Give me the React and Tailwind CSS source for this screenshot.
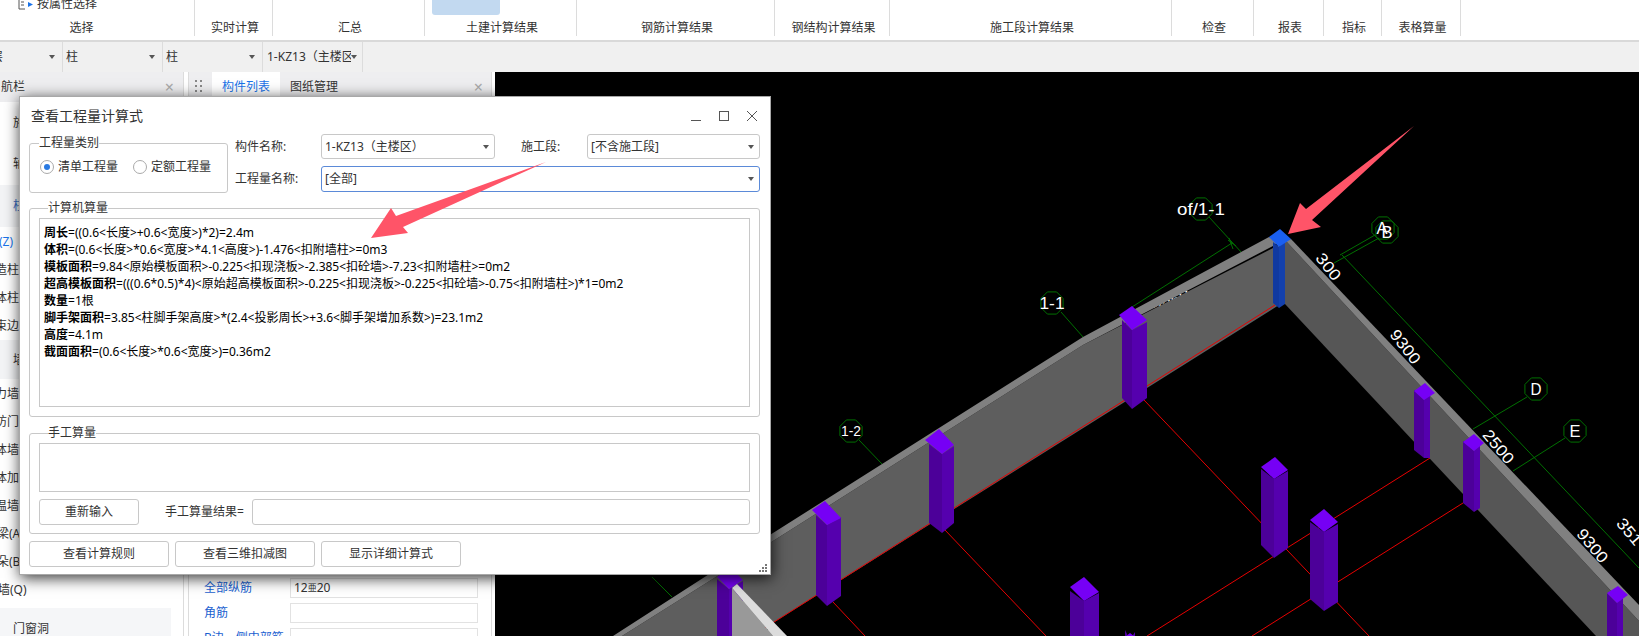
import React from "react";

const ribbon = [
  { w: "w-[195px]", label: "选择", pad: "pr-[31px]" },
  { w: "w-[78px]", label: "实时计算" },
  { w: "w-[152px]", label: "汇总" },
  { w: "w-[152px]", label: "土建计算结果", blue: true },
  { w: "w-[198px]", label: "钢筋计算结果" },
  { w: "w-[115px]", label: "钢结构计算结果" },
  { w: "w-[282px]", label: "施工段计算结果" },
  { w: "w-[82px]", label: "检查" },
  { w: "w-[70px]", label: "报表" },
  { w: "w-[58px]", label: "指标" },
  { w: "w-[79px]", label: "表格算量" },
];

const sideRows = [
  { h: "h-[41px]", text: "施工段", x: "ml-[13px]" },
  { h: "h-[42px]", text: "轴线", x: "ml-[13px]" },
  { h: "h-[42px]", text: "柱", x: "ml-[13px]", bg: "bg-[#f3f4f6]", color: "text-[#3a6fc4]" },
  { h: "h-[29px]", text: "(Z)", x: "-ml-[1px]", color: "text-[#1a73e8]" },
  { h: "h-[28px]", text: "造柱", x: "-ml-[5px]" },
  { h: "h-[28px]", text: "体柱", x: "-ml-[5px]" },
  { h: "h-[28px]", text: "束边", x: "-ml-[5px]" },
  { h: "h-[39px]", text: "墙", x: "ml-[13px]", bg: "bg-[#f3f4f6]" },
  { h: "h-[29px]", text: "力墙", x: "-ml-[5px]" },
  { h: "h-[28px]", text: "防门", x: "-ml-[5px]" },
  { h: "h-[28px]", text: "体墙", x: "-ml-[5px]" },
  { h: "h-[28px]", text: "体加", x: "-ml-[5px]" },
  { h: "h-[28px]", text: "温墙", x: "-ml-[5px]" },
  { h: "h-[28px]", text: "梁(A", x: "-ml-[3px]" },
  { h: "h-[28px]", text: "朵(B", x: "-ml-[3px]" },
  { h: "h-[28px]", text: "墙(Q)", x: "-ml-[2px]" },
];

const calcLines = [
  ["周长", "=((0.6<长度>+0.6<宽度>)*2)=2.4m"],
  ["体积", "=(0.6<长度>*0.6<宽度>*4.1<高度>)-1.476<扣附墙柱>=0m3"],
  ["模板面积", "=9.84<原始模板面积>-0.225<扣现浇板>-2.385<扣砼墙>-7.23<扣附墙柱>=0m2"],
  ["超高模板面积", "=(((0.6*0.5)*4)<原始超高模板面积>-0.225<扣现浇板>-0.225<扣砼墙>-0.75<扣附墙柱>)*1=0m2"],
  ["数量", "=1根"],
  ["脚手架面积", "=3.85<柱脚手架高度>*(2.4<投影周长>+3.6<脚手架增加系数>)=23.1m2"],
  ["高度", "=4.1m"],
  ["截面面积", "=(0.6<长度>*0.6<宽度>)=0.36m2"],
];

const Caret = () => (
  <span className="shrink-0 w-0 h-0 border-x-[3px] border-x-transparent border-t-[4px] border-t-[#555]" />
);

const Select = ({ value, active, className }) => (
  <div
    className={`flex items-center justify-between pl-[3px] pr-[5px] bg-white border rounded-[3px] ${
      active ? "border-[#5b8ad8]" : "border-[#c8c8c8]"
    } ${className}`}
  >
    <span>{value}</span>
    <Caret />
  </div>
);

const Btn = ({ children, className }) => (
  <button className={`h-[26px] flex items-center justify-center bg-white border border-[#c8c8c8] rounded-[3px] text-[#333] ${className}`}>
    {children}
  </button>
);

const octagon = (cx, cy, r) =>
  Array.from({ length: 8 }, (_, i) => {
    const a = ((i + 0.5) * Math.PI) / 4;
    return `${cx + r * Math.cos(a)},${cy + r * Math.sin(a)}`;
  }).join(" ");

const greens = [
  [1209, 217, 1242, 253],
  [1132, 307, 1232, 243],
  [1228, 240, 1236, 246],
  [1229, 238, 1233, 249],
  [1061, 312, 1083, 337],
  [859, 440, 882, 464],
  [652, 577, 672, 597],
  [1375, 235, 1340, 255],
  [1379, 238, 1334, 263],
  [1342, 255, 1639, 568],
  [1527, 397, 1473, 429],
  [1565, 438, 1513, 471],
];

const reds = [
  [1275, 305, 752, 636],
  [1144, 400, 1369, 636],
  [945, 530, 1046, 636],
  [833, 602, 865, 636],
  [1430, 458, 1147, 636],
  [1463, 503, 1252, 636],
];

const circles = [
  [1201, 209],
  [1052, 303],
  [851, 431],
  [1383, 228],
  [1387, 232],
  [1536, 389],
  [1575, 431],
];

const labels = [
  { t: "of/1-1", x: 1201, y: 215, len: 48, size: 17 },
  { t: "1-1", x: 1052, y: 309, len: 25, size: 17 },
  { t: "1-2", x: 851, y: 436, len: 20, size: 15 },
  { t: "A", x: 1382, y: 234, len: 11, size: 16 },
  { t: "B", x: 1387, y: 238, len: 11, size: 16 },
  { t: "D", x: 1536, y: 395, len: 11, size: 16 },
  { t: "E", x: 1575, y: 437, len: 11, size: 16 },
  { t: "7250", x: 1172, y: 307, len: 38, size: 16, rot: -33 },
  { t: "300", x: 1328, y: 272, len: 30, size: 16, rot: 52 },
  { t: "9300", x: 1405, y: 352, len: 39, size: 16, rot: 52 },
  { t: "2500", x: 1498, y: 452, len: 39, size: 16, rot: 50 },
  { t: "9300", x: 1592, y: 551, len: 39, size: 16, rot: 50 },
  { t: "351", x: 1629, y: 537, len: 30, size: 16, rot: 50 },
];

// top: l, t, r, b points of the diamond; l/c/r and botL/botR/tip of the shaft
const columns = [
  { top: "1119,315 1132,306 1147,320 1132,330", l: 1122, c: 1132, r: 1147, by: 330, botL: 398, botR: 398, tip: 409 },
  { top: "925,440 939,429 954,445 942,454", l: 929, c: 942, r: 954, by: 454, botL: 523, botR: 523, tip: 533 },
  { top: "812,510 825,501 841,518 827,525", l: 816, c: 827, r: 841, by: 525, botL: 595, botR: 596, tip: 606 },
  { top: "1414,391 1425,383 1435,393 1424,400", l: 1414, c: 1424, r: 1430, by: 400, botL: 450, botR: 458, tip: 458 },
  { top: "1463,442 1474,434 1484,443 1474,451", l: 1463, c: 1474, r: 1480, by: 451, botL: 503, botR: 508, tip: 512 },
  { top: "1607,593 1618,586 1628,595 1617,603", l: 1607, c: 1617, r: 1623, by: 603, botL: 640, botR: 640, tip: 640 },
  { top: "1261,467 1275,457 1288,470 1274,479", l: 1261, c: 1274, r: 1288, by: 479, botL: 545, botR: 548, tip: 558 },
  { top: "1310,520 1324,509 1338,522 1324,532", l: 1310, c: 1324, r: 1338, by: 532, botL: 599, botR: 602, tip: 611 },
  { top: "1070,587 1084,577 1099,592 1084,601", l: 1070, c: 1084, r: 1099, by: 601, botL: 640, botR: 640, tip: 640 },
  { top: "1125,637 1130,633 1135,637 1130,640", l: 1125, c: 1130, r: 1135, by: 640, botL: 640, botR: 640, tip: 640 },
  { top: "717,577 730,567 743,580 729,589", l: 717, c: 729, r: 743, by: 589, botL: 640, botR: 640, tip: 640 },
];

const Model = () => (
  <svg className="block w-full h-full" viewBox="495 72 1144 564">
    <g stroke="#007000" strokeWidth="1" fill="none">
      {greens.map(([x1, y1, x2, y2], i) => (
        <line key={i} x1={x1} y1={y1} x2={x2} y2={y2} />
      ))}
      {circles.map(([x, y], i) => (
        <polygon key={i} points={octagon(x, y, 12)} />
      ))}
    </g>
    {labels.map((l, i) => (
      <text
        key={i}
        x={l.x}
        y={l.y}
        textAnchor="middle"
        fill="#fff"
        fontSize={l.size}
        fontFamily="'Liberation Sans', sans-serif"
        textLength={l.len}
        lengthAdjust="spacingAndGlyphs"
        transform={l.rot ? `rotate(${l.rot} ${l.x} ${l.y - 5})` : undefined}
      >
        {l.t}
      </text>
    ))}
    {/* walls */}
    <polygon points="1279,245 1279,305 752,636 622,636 773,541 1083,345" fill="#5e5e5e" />
    <polygon points="1269,237 1083,337 773,533 613,636 622,636 773,541 1083,345 1273,246 1280,240" fill="#808080" />
    <polygon points="1285,240 1639,621 1639,640 1596,636 1285,304" fill="#565656" />
    <polygon points="1291,239 1639,605 1639,621 1285,240" fill="#808080" />
    {/* front wall, lower left corner */}
    <polygon points="732,588 732,636 777,636" fill="#999999" />
    {reds.map(([x1, y1, x2, y2], i) => (
      <line key={i} x1={x1} y1={y1} x2={x2} y2={y2} stroke="#e60000" strokeWidth="1" />
    ))}
    <line x1="1277" y1="308" x2="752" y2="639" stroke="#000" strokeWidth="1" />
    {/* corner column */}
    <polygon points="1273,242 1279,247 1279,308 1273,303" fill="#1039a0" />
    <polygon points="1279,247 1285,242 1285,304 1279,308" fill="#1340ac" />
    <polygon points="1269,237 1280,229 1291,239 1279,247" fill="#1a5ff0" />
    {columns.map((c, i) => (
      <g key={i}>
        <polygon points={`${c.l},${c.by - 10} ${c.c},${c.by} ${c.c},${c.tip} ${c.l},${c.botL}`} fill="#4c0099" />
        <polygon points={`${c.c},${c.by} ${c.r},${c.by - 8} ${c.r},${c.botR} ${c.c},${c.tip}`} fill="#5500ae" />
        <polygon points={c.top} fill="#7600f5" />
      </g>
    ))}
    <polygon points="737,584 787,636 773,636 732,588" fill="#dcdcdc" />
    <polygon points="732,588 732,636 773,636" fill="#999999" />
  </svg>
);

export default function App() {
  return (
    <div className="relative w-[1639px] h-[636px] overflow-hidden bg-white flex flex-col text-[12px] leading-[16px] text-[#333] font-['Noto_Sans','Noto_Sans_CJK_SC',sans-serif]">
      {/* ribbon */}
      <div className="h-[42px] shrink-0 flex items-start border-b-2 border-[#d9d9d9]">
        {ribbon.map((s, i) => (
          <div key={s.label} className={`${s.w} h-[36px] shrink-0 flex flex-col border-r border-[#dcdcdc]`}>
            {i === 0 && (
              <div className="h-[16px] -mt-[4px] mb-[8px] flex items-center pl-[18px]">
                <svg width="16" height="12" viewBox="0 0 16 12" className="mr-[3px]">
                  <path d="M7 1H1v10h6M3 4h3M3 7h3" fill="none" stroke="#555" strokeWidth="1" />
                  <path d="M10 4l5 2.5L10 9z" fill="#1a73e8" />
                </svg>
                <span>按属性选择</span>
                <span className="ml-[5px]">
                  <Caret />
                </span>
              </div>
            )}
            {s.blue && <div className="h-[15px] w-[68px] ml-[7px] mb-[5px] bg-[#c2d9f0] rounded-b-[3px]" />}
            {i !== 0 && !s.blue && <div className="h-[20px]" />}
            <div className={`text-center ${s.pad || "pl-[3px]"}`}>{s.label}</div>
          </div>
        ))}
      </div>

      {/* combo toolbar */}
      <div className="h-[30px] shrink-0 flex bg-[#f0f0f0]">
        <div className="w-[63px] flex items-center justify-end pr-[7px] border-r border-[#dcdcdc] relative overflow-hidden">
          <span className="mr-auto -ml-[9px]">层</span>
          <Caret />
        </div>
        {["柱", "柱"].map((t, i) => (
          <div key={i} className="w-[100px] flex items-center justify-between pl-[3px] pr-[7px] border-r border-[#dcdcdc]">
            <span>{t}</span>
            <Caret />
          </div>
        ))}
        <div className="w-[100px] flex items-center justify-between pl-[4px] pr-[5px] border-r border-[#dcdcdc]">
          <span className="w-[84px] overflow-hidden whitespace-nowrap">1-KZ13（主楼区）</span>
          <Caret />
        </div>
      </div>

      {/* work area */}
      <div className="flex-1 flex min-h-0">
        <div className="w-[184px] shrink-0 border-r border-[#dcdcdc] overflow-hidden">
          <div className="h-[30px] bg-[#eeeef0] flex items-center justify-between pl-[1px] pr-[9px]">
            <span>航栏</span>
            <span className="text-[#aaa] text-[16px]">×</span>
          </div>
          {sideRows.map((r) => (
            <div key={r.text + r.h} className={`${r.h} ${r.bg || ""} flex items-center whitespace-nowrap`}>
              <span className={`${r.x} ${r.color || ""}`}>{r.text}</span>
            </div>
          ))}
          <div className="h-[4px]" />
          <div className="w-[171px] h-[60px] bg-[#f5f6f8] pl-[13px] pt-[13px]">门窗洞</div>
        </div>
        <div className="w-[4px] shrink-0 bg-white" />
        <div className="w-[304px] shrink-0 border-x border-[#dcdcdc] overflow-hidden">
          <div className="h-[30px] bg-[#eeeef0] flex items-center pr-[8px]">
            <svg width="8" height="14" viewBox="0 0 8 14" className="ml-[6px] mr-[9px]" fill="#888">
              <rect x="0" y="0" width="2" height="2" />
              <rect x="5" y="0" width="2" height="2" />
              <rect x="0" y="5" width="2" height="2" />
              <rect x="5" y="5" width="2" height="2" />
              <rect x="0" y="10" width="2" height="2" />
              <rect x="5" y="10" width="2" height="2" />
            </svg>
            <div className="w-[68px] h-full bg-white flex items-center justify-center text-[#1a73e8]">构件列表</div>
            <div className="ml-[10px]">图纸管理</div>
            <span className="ml-auto text-[#aaa] text-[16px]">×</span>
          </div>
          <div className="pt-[476px] pl-[15px] pr-[13px] flex flex-col gap-[5px]">
            {[
              ["全部纵筋", <>12<span className="text-[9px] align-[3px]">亜</span>20</>],
              ["角筋", ""],
              ["B边一侧中部筋", ""],
            ].map(([name, val]) => (
              <div key={name} className="flex items-center h-[20px] whitespace-nowrap">
                <span className="w-[86px] text-[#1a5fd0]">{name}</span>
                <div className="flex-1 h-full px-[3px] border border-[#e2e2e2] flex items-center">{val}</div>
              </div>
            ))}
          </div>
        </div>
        <div className="w-[3px] shrink-0 bg-white" />
        <div className="flex-1 bg-black min-w-0">
          <Model />
        </div>
      </div>

      {/* floating dialog */}
      <div className="absolute left-[19px] top-[96px] w-[752px] h-[479px] bg-white border border-[#a8a8a8] shadow-[1px_3px_14px_rgba(0,0,0,0.8)] flex flex-col pl-[9px] pr-[10px]">
        <div className="h-[37px] shrink-0 flex items-center">
          <span className="ml-[2px] text-[14px] text-[#333]">查看工程量计算式</span>
          <div className="ml-auto mr-[3px] flex items-center gap-[18px]">
            <svg width="10" height="10" viewBox="0 0 10 10">
              <path d="M0 9.5h10" stroke="#555" />
            </svg>
            <svg width="10" height="10" viewBox="0 0 10 10">
              <rect x="0.5" y="0.5" width="9" height="9" fill="none" stroke="#555" />
            </svg>
            <svg width="10" height="10" viewBox="0 0 10 10">
              <path d="M0 0l10 10M10 0L0 10" stroke="#555" />
            </svg>
          </div>
        </div>

        <div className="flex shrink-0">
          <fieldset className="w-[199px] h-[58px] mt-[1px] border border-[#c8c8c8] rounded-[3px]">
            <legend className="ml-[9px]">工程量类别</legend>
            <div className="flex items-center h-[16px] mt-[8px] pl-[10px]">
              <span className="w-[14px] h-[14px] rounded-full border border-[#aaa] flex items-center justify-center mr-[4px]">
                <span className="w-[6px] h-[6px] rounded-full bg-[#2a7ae2]" />
              </span>
              <span className="w-[60px] mr-[15px]">清单工程量</span>
              <span className="w-[14px] h-[14px] rounded-full border border-[#aaa] mr-[4px]" />
              <span>定额工程量</span>
            </div>
          </fieldset>
          <div className="ml-[7px] flex-1 flex flex-col gap-[7px]">
            <div className="flex items-center h-[25px]">
              <span className="w-[86px]">构件名称:</span>
              <Select value="1-KZ13（主楼区）" className="w-[174px] h-full" />
              <span className="ml-[26px] w-[66px]">施工段:</span>
              <Select value="[不含施工段]" className="w-[173px] h-full" />
            </div>
            <div className="flex items-center h-[26px]">
              <span className="w-[86px]">工程量名称:</span>
              <Select value="[全部]" active className="flex-1 h-full" />
            </div>
          </div>
        </div>

        <fieldset className="h-[217px] mt-[7px] shrink-0 border border-[#c8c8c8] rounded-[3px] px-[9px]">
          <legend className="ml-[9px]">计算机算量</legend>
          <div className="mt-[2px] h-[189px] border border-[#c8c8c8] pl-[4px] pt-[5px] text-black leading-[17px] whitespace-nowrap">
            {calcLines.map(([name, rest]) => (
              <div key={name}>
                <b className="font-bold">{name}</b>
                {rest}
              </div>
            ))}
          </div>
        </fieldset>

        <fieldset className="h-[109px] mt-[8px] shrink-0 border border-[#c8c8c8] rounded-[3px] px-[9px]">
          <legend className="ml-[9px]">手工算量</legend>
          <div className="mt-[2px] h-[49px] border border-[#c8c8c8]" />
          <div className="mt-[7px] flex items-center">
            <Btn className="w-[100px]">重新输入</Btn>
            <span className="ml-[26px] w-[87px] whitespace-nowrap">手工算量结果=</span>
            <div className="flex-1 h-[26px] border border-[#c8c8c8] rounded-[3px]" />
          </div>
        </fieldset>

        <div className="mt-[7px] flex gap-[6px] shrink-0">
          <Btn className="w-[140px]">查看计算规则</Btn>
          <Btn className="w-[140px]">查看三维扣减图</Btn>
          <Btn className="w-[140px]">显示详细计算式</Btn>
        </div>

        <svg width="8" height="8" viewBox="0 0 8 8" fill="#777" className="absolute right-[3px] bottom-[2px]">
          <rect x="6" y="0" width="2" height="2" />
          <rect x="3" y="3" width="2" height="2" />
          <rect x="6" y="3" width="2" height="2" />
          <rect x="0" y="6" width="2" height="2" />
          <rect x="3" y="6" width="2" height="2" />
          <rect x="6" y="6" width="2" height="2" />
        </svg>
      </div>

      {/* annotation arrows drawn on top of the screenshot */}
      <svg className="absolute inset-0 pointer-events-none" width="1639" height="636" viewBox="0 0 1639 636">
        <polygon points="546,162 396,216 391,208 371,238 408,233 403,227" fill="#ff5468" />
        <polygon points="1414,126 1306,209 1300,203 1288,234 1321,227 1312,220" fill="#ff5468" />
      </svg>
    </div>
  );
}
